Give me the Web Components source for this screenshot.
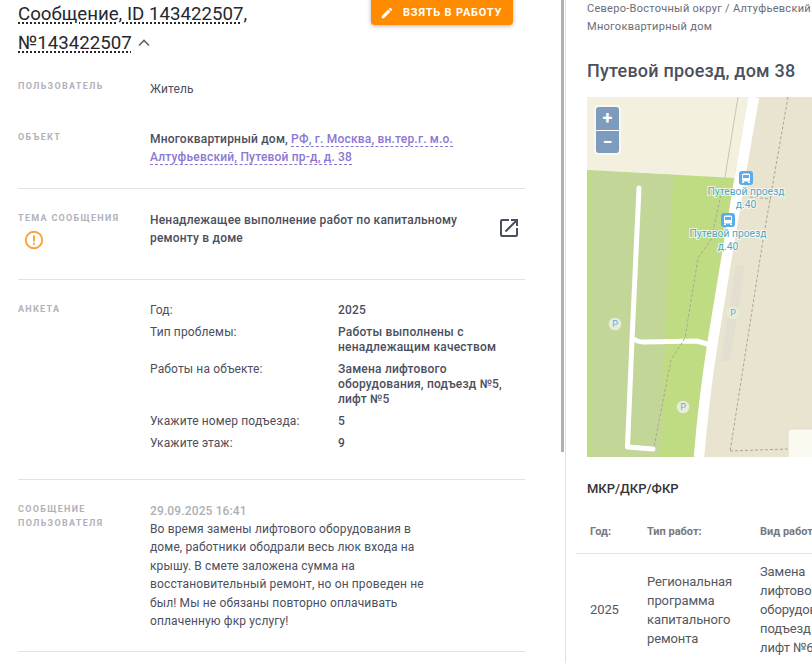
<!DOCTYPE html>
<html lang="ru">
<head>
<meta charset="utf-8">
<title>Сообщение</title>
<style>
  html, body { margin: 0; height: 100%; overflow: hidden; background: #fff; }
  body { font-family: Roboto, "Liberation Sans", sans-serif; color: #4b4f5e; }
</style>
</head>
<body>
<message-page></message-page>

<script>
// Single labelled row of the message card
class InfoRow extends HTMLElement {
  constructor() {
    super();
    this.attachShadow({ mode: 'open' });
    this.shadowRoot.innerHTML = `
      <style>
        :host { display: grid; grid-template-columns: 132px 1fr; font-size: 12px; line-height: 18px; letter-spacing: .13px; box-sizing: border-box; }
        :host([ruled]) { border-bottom: 1px solid #e2e2e2; }
        .label { font-size: 9px; line-height: 14px; font-weight: 700; letter-spacing: 1.3px; color: #b1b2ba; text-transform: uppercase; }
      </style>
      <div class="label"><slot name="label"></slot></div>
      <div><slot></slot></div>
    `;
  }
}
customElements.define('info-row', InfoRow);

// Two column question list
class SurveyList extends HTMLElement {
  constructor() {
    super();
    this.attachShadow({ mode: 'open' });
  }

  connectedCallback() {
    const items = JSON.parse(this.getAttribute('items'));
    const rows = items.map(i => `<div>${i[0]}</div><b>${i[1]}</b>`).join('');
    this.shadowRoot.innerHTML = `
      <style>
        :host { display: grid; grid-template-columns: 188px 170px; row-gap: 7px; font-size: 12px; line-height: 15px; }
        b { font-weight: 500; letter-spacing: .2px; }
      </style>
      ${rows}
    `;
  }
}
customElements.define('survey-list', SurveyList);

// Orange action button
class ActionButton extends HTMLElement {
  constructor() {
    super();
    this.attachShadow({ mode: 'open' });
    this.shadowRoot.innerHTML = `
      <style>
        :host { display: flex; align-items: center; box-sizing: border-box; width: 142px; height: 36px; padding: 11px 0 0 9px; gap: 9px;
          background: #ff8c00; color: #fff; border-radius: 4px; box-shadow: 0 1px 4px rgba(0,0,0,.3);
          font-size: 11px; font-weight: 700; letter-spacing: .8px; white-space: nowrap; }
        svg { width: 14px; height: 14px; fill: #fff; flex: none; }
      </style>
      <svg viewBox="0 0 24 24"><path d="M3 17.25V21h3.75L17.81 9.94l-3.75-3.75L3 17.25zM20.71 7.04a1 1 0 0 0 0-1.41l-2.34-2.34a1 1 0 0 0-1.41 0l-1.83 1.83 3.75 3.75 1.83-1.83z"/></svg>
      <slot></slot>
    `;
  }
}
customElements.define('action-button', ActionButton);

// Left card with the message details
class MessageCard extends HTMLElement {
  constructor() {
    super();
    this.attachShadow({ mode: 'open' });
    const survey = JSON.stringify([
      ['Год:', '2025'],
      ['Тип проблемы:', 'Работы выполнены с ненадлежащим качеством'],
      ['Работы на объекте:', 'Замена лифтового оборудования, подъезд №5, лифт №5'],
      ['Укажите номер подъезда:', '5'],
      ['Укажите этаж:', '9']
    ]).replace(/"/g, '&quot;');
    this.shadowRoot.innerHTML = `
      <style>
        :host { display: block; width: 507px; margin-left: 18px; }
        .head { display: flex; justify-content: space-between; align-items: flex-start; height: 78px; }
        h1 { margin: 0; width: 300px; font-size: 18.7px; line-height: 29px; font-weight: 400; color: #26282e; }
        h1 span { text-decoration: underline dotted 2px #26282e; text-underline-offset: 2px; }
        h1 svg { width: 20px; height: 20px; vertical-align: -4px; margin-left: 2px; }
        action-button { margin-top: -11px; margin-right: 12px; }
        a { color: #8a78d3; font-weight: 500; letter-spacing: .2px; text-decoration: none; border-bottom: 1px dashed #8a78d3; }
        b { font-weight: 500; letter-spacing: .2px; }
        .warn { display: block; margin: 5px 0 0 6px; width: 20px; height: 20px; }
        .subject { display: flex; justify-content: space-between; }
        .subject div { width: 320px; }
        .subject svg { width: 24px; height: 24px; margin: 0 4px 0 0; fill: #4b4f5e; position: relative; top: 5px; }
        .date { color: #aeafb6; font-weight: 500; }
        .text { width: 290px; line-height: 18.4px; }
        #user { height: 52px; padding-top: 1px; }
        #user .v { padding-top: 1px; }
        #object { height: 59px; }
        #subject { height: 91px; padding-top: 22px; }
        #survey { height: 200px; padding-top: 22px; }
        #message { height: 172px; padding-top: 22px; }
        survey-list { padding-top: 1px; }
      </style>
      <div class="head">
        <h1><span>Сообщение, ID 143422507,</span><br><span>№143422507</span><svg viewBox="0 0 24 24" fill="none" stroke="#5f6268" stroke-width="2"><path d="M6 15l6-6 6 6"/></svg></h1>
        <action-button>ВЗЯТЬ В РАБОТУ</action-button>
      </div>
      <info-row id="user"><span slot="label">Пользователь</span><div class="v">Житель</div></info-row>
      <info-row id="object" ruled><span slot="label">Объект</span>
        <div><b>Многоквартирный дом,</b> <a>РФ, г. Москва, вн.тер.г. м.о.</a><br><a>Алтуфьевский, Путевой пр-д, д. 38</a></div>
      </info-row>
      <info-row id="subject" ruled>
        <div slot="label">Тема сообщения
          <svg class="warn" viewBox="0 0 20 20"><circle cx="10" cy="10" r="8.2" fill="none" stroke="#f9a13a" stroke-width="1.9"/><rect x="9.1" y="5.5" width="1.9" height="6" fill="#f9a13a"/><rect x="9.1" y="12.8" width="1.9" height="1.9" fill="#f9a13a"/></svg>
        </div>
        <div class="subject">
          <div><b>Ненадлежащее выполнение работ по капитальному ремонту в доме</b></div>
          <svg viewBox="0 0 24 24"><path d="M19 19H5V5h7V3H5a2 2 0 0 0-2 2v14a2 2 0 0 0 2 2h14a2 2 0 0 0 2-2v-7h-2v7zM14 3v2h3.59l-9.83 9.83 1.41 1.41L19 6.41V10h2V3h-7z"/></svg>
        </div>
      </info-row>
      <info-row id="survey" ruled><span slot="label">Анкета</span><survey-list items="${survey}"></survey-list></info-row>
      <info-row id="message" ruled><span slot="label" style="line-height:14px;display:block">Сообщение<br>пользователя</span>
        <div><div class="date">29.09.2025 16:41</div>
        <div class="text">Во время замены лифтового оборудования в доме, работники ободрали весь люк входа на крышу. В смете заложена сумма на восстановительный ремонт, но он проведен не был! Мы не обязаны повторно оплачивать оплаченную фкр услугу!</div></div>
      </info-row>
    `;
  }
}
customElements.define('message-card', MessageCard);

// Static picture of the map tiles, drawn in page coordinates through the viewBox
class HouseMap extends HTMLElement {
  constructor() {
    super();
    this.attachShadow({ mode: 'open' });
    const bus = (x, y) => `
      <rect x="${x - 7}" y="${y - 7}" width="14" height="14" rx="3" fill="#5cabea"/>
      <rect x="${x - 4}" y="${y - 4.5}" width="8" height="8" rx="1.5" fill="#fff"/>
      <rect x="${x - 3}" y="${y - 3}" width="6" height="3" fill="#5cabea"/>
      <rect x="${x - 4}" y="${y + 3.5}" width="2" height="1.5" fill="#fff"/><rect x="${x + 2}" y="${y + 3.5}" width="2" height="1.5" fill="#fff"/>`;
    const park = (x, y) => `
      <circle cx="${x}" cy="${y}" r="6.3" fill="#e6edd8"/>
      <text x="${x}" y="${y + 3.2}" text-anchor="middle" font-size="9" fill="#63aee0">P</text>`;
    const label = (x, y) => `
      <text class="lbl" x="${x}" y="${y}" text-anchor="middle">Путевой проезд</text>
      <text class="lbl" x="${x}" y="${y + 13}" text-anchor="middle">д.40</text>`;
    this.shadowRoot.innerHTML = `
      <style>
        :host { display: block; position: relative; width: 225px; height: 360px; overflow: hidden; }
        svg { display: block; font-family: Roboto, "Liberation Sans", sans-serif; }
        .lbl { font-size: 10.3px; fill: #4ea7c4; stroke: rgba(255,255,255,.75); stroke-width: 2px; paint-order: stroke; }
        .zoom { position: absolute; left: 7px; top: 8px; width: 23px; border: 2px solid rgba(255,255,255,.5); border-radius: 4px; }
        .zoom div { height: 22.5px; background: #7d9bbd; color: #fff; font: 700 18px/21px Roboto, sans-serif; text-align: center; }
        .zoom div:first-child { border-bottom: 1px solid #fff; border-radius: 3px 3px 0 0; }
        .zoom div:last-child { border-radius: 0 0 3px 3px; }
      </style>
      <svg width="225" height="360" viewBox="587 97 225 360">
        <rect x="587" y="97" width="225" height="360" fill="#e9e4d0"/>
        <polygon points="587,97 750,97 734,178 587,170" fill="#f3f0df"/>
        <polygon points="587,170 734,178 694,457 587,457" fill="#bfdc82"/>
        <polygon points="592,171 673,175 660,457 592,457" fill="#c2d797"/>
        <polygon points="587,170 592,171 592,457 587,457" fill="#bfdb8a"/>
        <path d="M738 97 L725 177" stroke="#c9c5b4" stroke-width="1" fill="none"/>
        <polygon points="736,265 745,265 730,361 721,361" fill="#e2dfd0"/>
        <path d="M754 97 C 740 175 728 250 713 340 C 706 385 702 420 699 457" stroke="#fff" stroke-width="10.5" fill="none"/>
        <path d="M639 188 L632 340 L627.5 447 L653 449" stroke="#fff" stroke-width="5" fill="none" stroke-linecap="round" stroke-linejoin="round"/>
        <path d="M634 338 Q 636 342 644 342 L 697 341 L 709 344.5" stroke="#fff" stroke-width="5" fill="none"/>
        <g stroke="#a9a698" stroke-width="1" stroke-dasharray="3 2" fill="none">
          <path d="M722 190 L 711 240 L 698 258 L 685 338 L 671 360 L 654 447"/>
          <path d="M788 97 L 763 240 L 730 452"/>
          <path d="M730 451 L 788 449"/>
          <path d="M750 197 L 771 199"/>
        </g>
        <rect x="788" y="429" width="40" height="40" rx="3" fill="#fafaf0" stroke="#dfdccb"/>
        ${park(615, 324)}${park(683, 407)}${park(733, 313)}
        ${bus(746, 178)}${bus(728, 220)}
        ${label(746, 195)}${label(728, 237)}
      </svg>
      <div class="zoom"><div>+</div><div>−</div></div>
    `;
  }
}
customElements.define('house-map', HouseMap);

// Right column: address, map and works table
class HousePanel extends HTMLElement {
  constructor() {
    super();
    this.attachShadow({ mode: 'open' });
    this.shadowRoot.innerHTML = `
      <style>
        :host { display: block; flex: none; width: 247px; height: 663px; overflow: hidden; border-left: 1px solid #e2e2e2; box-sizing: border-box; }
        .inner { width: 500px; }
        .crumbs { margin: 0 0 0 21px; font-size: 11px; line-height: 18px; letter-spacing: .28px; color: #6a6d78; white-space: nowrap; }
        h2 { margin: 23px 0 14px 21px; font-size: 18px; line-height: 24px; font-weight: 500; letter-spacing: .22px; color: #4b4f5e; }
        house-map { margin-left: 21px; }
        h3 { margin: 23px 0 0 21px; font-size: 13px; line-height: 17px; font-weight: 500; color: #33353b; }
        .table { margin: 23px 0 0 10px; font-size: 13px; line-height: 19px; color: #55585f; }
        .tr { display: grid; grid-template-columns: 57px 113px 88px; padding-left: 14px; align-items: center; }
        .th { height: 34px; padding-bottom: 10px; font-size: 11px; font-weight: 700; color: #777a80; border-bottom: 1px solid #e2e2e2; white-space: nowrap; box-sizing: border-box; }
        .cut { padding-top: 8px; letter-spacing: -.1px; }
      </style>
      <div class="inner">
        <div class="crumbs">Северо-Восточный округ / Алтуфьевский<br>Многоквартирный дом</div>
        <h2>Путевой проезд, дом 38</h2>
        <house-map></house-map>
        <h3>МКР/ДКР/ФКР</h3>
        <div class="table">
          <div class="tr th"><div>Год:</div><div>Тип работ:</div><div>Вид работ:</div></div>
          <div class="tr cut">
            <div>2025</div>
            <div>Региональная программа капитального ремонта</div>
            <div>Замена лифтового оборудования, подъезд №6, лифт №6</div>
          </div>
        </div>
      </div>
    `;
  }
}
customElements.define('house-panel', HousePanel);

// Page frame with the two columns and the left scrollbar
class MessagePage extends HTMLElement {
  constructor() {
    super();
    this.attachShadow({ mode: 'open' });
    this.shadowRoot.innerHTML = `
      <style>
        :host { display: flex; width: 812px; height: 663px; overflow: hidden; }
        .left { flex: none; width: 561px; height: 663px; overflow: hidden; }
        .thumb { flex: none; width: 3px; height: 452px; background: #b0b0b6; margin-right: 1px; }
      </style>
      <div class="left"><message-card></message-card></div>
      <div class="thumb"></div>
      <house-panel></house-panel>
    `;
  }
}
customElements.define('message-page', MessagePage);
</script>
</body>
</html>
